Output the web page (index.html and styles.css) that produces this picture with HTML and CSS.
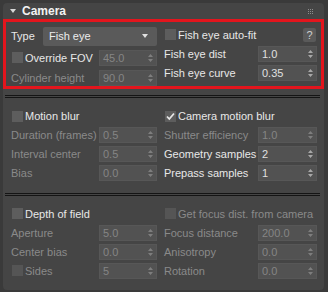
FILE: index.html
```html
<!DOCTYPE html>
<html lang="en">
<head>
    <meta charset="UTF-8">
    <link rel="stylesheet" href="styles.css">
</head>
<body>
    <div class="panel">
        <div class="head">
            <svg class="tri" width="6" height="4" viewBox="0 0 6 4"><path d="M0 0H6L3 4Z" fill="#d8d8d8"/></svg>
            <span class="title">Camera</span>
            <svg class="grip" width="5" height="5" viewBox="0 0 5 5" fill="#8c8c8c">
                <rect x="0" y="0" width="1" height="1"/><rect x="2" y="0" width="1" height="1"/><rect x="4" y="0" width="1" height="1"/>
                <rect x="0" y="2" width="1" height="1"/><rect x="2" y="2" width="1" height="1"/><rect x="4" y="2" width="1" height="1"/>
                <rect x="0" y="4" width="1" height="1"/><rect x="2" y="4" width="1" height="1"/><rect x="4" y="4" width="1" height="1"/>
            </svg>
        </div>

        <div class="sec sec-cam">
            <div class="col col-l wide-gap">
                <div class="row row-combo">
                    <span class="lbl">Type</span>
                    <div class="combo">Fish eye
                        <svg width="6" height="4" viewBox="0 0 6 4"><path d="M0 0H6L3 4Z" fill="#e0e0e0"/></svg>
                    </div>
                </div>
                <div class="row">
                    <span class="chk"><span class="box"></span>Override FOV</span>
                    <div class="spin off">45.0<svg class="arr" width="5" height="8" viewBox="0 0 5 8"><path d="M0 3L2.5 0L5 3ZM0 5H5L2.5 8Z"/></svg></div>
                </div>
                <div class="row off">
                    <span class="lbl">Cylinder height</span>
                    <div class="spin">90.0<svg class="arr" width="5" height="8" viewBox="0 0 5 8"><path d="M0 3L2.5 0L5 3ZM0 5H5L2.5 8Z"/></svg></div>
                </div>
            </div>
            <div class="col col-r">
                <div class="row">
                    <span class="chk"><span class="box"></span>Fish eye auto-fit</span>
                    <span class="help">?</span>
                </div>
                <div class="row">
                    <span class="lbl">Fish eye dist</span>
                    <div class="spin">1.0<svg class="arr" width="5" height="8" viewBox="0 0 5 8"><path d="M0 3L2.5 0L5 3ZM0 5H5L2.5 8Z"/></svg></div>
                </div>
                <div class="row">
                    <span class="lbl">Fish eye curve</span>
                    <div class="spin">0.35<svg class="arr" width="5" height="8" viewBox="0 0 5 8"><path d="M0 3L2.5 0L5 3ZM0 5H5L2.5 8Z"/></svg></div>
                </div>
            </div>
        </div>

        <div class="sep sep-first"></div>

        <div class="sec">
            <div class="col col-l">
                <div class="row">
                    <span class="chk"><span class="box"></span>Motion blur</span>
                </div>
                <div class="row off">
                    <span class="lbl">Duration (frames)</span>
                    <div class="spin">0.5<svg class="arr" width="5" height="8" viewBox="0 0 5 8"><path d="M0 3L2.5 0L5 3ZM0 5H5L2.5 8Z"/></svg></div>
                </div>
                <div class="row off">
                    <span class="lbl">Interval center</span>
                    <div class="spin">0.5<svg class="arr" width="5" height="8" viewBox="0 0 5 8"><path d="M0 3L2.5 0L5 3ZM0 5H5L2.5 8Z"/></svg></div>
                </div>
                <div class="row off">
                    <span class="lbl">Bias</span>
                    <div class="spin">0.0<svg class="arr" width="5" height="8" viewBox="0 0 5 8"><path d="M0 3L2.5 0L5 3ZM0 5H5L2.5 8Z"/></svg></div>
                </div>
            </div>
            <div class="col col-r">
                <div class="row">
                    <span class="chk"><span class="box"><svg width="11" height="11" viewBox="0 0 11 11"><path d="M2 5.5L4.3 8L9 2.5" fill="none" stroke="#e6e6e6" stroke-width="1.8"/></svg></span>Camera motion blur</span>
                </div>
                <div class="row off">
                    <span class="lbl">Shutter efficiency</span>
                    <div class="spin">1.0<svg class="arr" width="5" height="8" viewBox="0 0 5 8"><path d="M0 3L2.5 0L5 3ZM0 5H5L2.5 8Z"/></svg></div>
                </div>
                <div class="row">
                    <span class="lbl">Geometry samples</span>
                    <div class="spin">2<svg class="arr" width="5" height="8" viewBox="0 0 5 8"><path d="M0 3L2.5 0L5 3ZM0 5H5L2.5 8Z"/></svg></div>
                </div>
                <div class="row">
                    <span class="lbl">Prepass samples</span>
                    <div class="spin">1<svg class="arr" width="5" height="8" viewBox="0 0 5 8"><path d="M0 3L2.5 0L5 3ZM0 5H5L2.5 8Z"/></svg></div>
                </div>
            </div>
        </div>

        <div class="sep"></div>

        <div class="sec">
            <div class="col col-l">
                <div class="row">
                    <span class="chk"><span class="box"></span>Depth of field</span>
                </div>
                <div class="row off">
                    <span class="lbl">Aperture</span>
                    <div class="spin">5.0<svg class="arr" width="5" height="8" viewBox="0 0 5 8"><path d="M0 3L2.5 0L5 3ZM0 5H5L2.5 8Z"/></svg></div>
                </div>
                <div class="row off">
                    <span class="lbl">Center bias</span>
                    <div class="spin">0.0<svg class="arr" width="5" height="8" viewBox="0 0 5 8"><path d="M0 3L2.5 0L5 3ZM0 5H5L2.5 8Z"/></svg></div>
                </div>
                <div class="row off">
                    <span class="chk"><span class="box"></span>Sides</span>
                    <div class="spin">5<svg class="arr" width="5" height="8" viewBox="0 0 5 8"><path d="M0 3L2.5 0L5 3ZM0 5H5L2.5 8Z"/></svg></div>
                </div>
            </div>
            <div class="col col-r">
                <div class="row off">
                    <span class="chk"><span class="box"></span>Get focus dist. from camera</span>
                </div>
                <div class="row off">
                    <span class="lbl">Focus distance</span>
                    <div class="spin">200.0<svg class="arr" width="5" height="8" viewBox="0 0 5 8"><path d="M0 3L2.5 0L5 3ZM0 5H5L2.5 8Z"/></svg></div>
                </div>
                <div class="row off">
                    <span class="lbl">Anisotropy</span>
                    <div class="spin">0.0<svg class="arr" width="5" height="8" viewBox="0 0 5 8"><path d="M0 3L2.5 0L5 3ZM0 5H5L2.5 8Z"/></svg></div>
                </div>
                <div class="row off">
                    <span class="lbl">Rotation</span>
                    <div class="spin">0.0<svg class="arr" width="5" height="8" viewBox="0 0 5 8"><path d="M0 3L2.5 0L5 3ZM0 5H5L2.5 8Z"/></svg></div>
                </div>
            </div>
        </div>
    </div>
</body>
</html>
```

FILE: styles.css
```css
body {
    margin: 0;
    background: #3a3a3a;
    font-family: "Liberation Sans", Arial, sans-serif;
    font-size: 11px;
    color: #e8e8e8;
}

.panel {
    margin: 3px 0 0 3px;
    width: 321px;
    height: 287px;
    background: #454545;
    border-radius: 4px;
    overflow: hidden;
    display: flex;
    flex-direction: column;
}

.head {
    height: 16px;
    display: flex;
    align-items: center;
    padding: 1px 7px 0 7px;
    box-sizing: border-box;
}
.head .tri {
    margin-right: 6px;
}
.head .title {
    font-size: 12px;
    font-weight: 700;
    color: #f2f2f2;
}
.head .grip {
    margin-left: auto;
    margin-right: 4px;
}

/* sections */
.sec {
    display: flex;
    gap: 7px;
    height: 95px;
    padding: 10px 7px 0 8px;
    box-sizing: border-box;
}
.sec-cam {
    height: 71px;
    border: 3px solid #e3151d; /* highlight box */
    padding: 5px 4px 0 5px;
}

.col {
    display: flex;
    flex-direction: column;
    gap: 3px;
}
.col-l { width: 146px; }
.col-r { width: 153px; }
.wide-gap { gap: 4px; }

.row {
    height: 16px;
    display: flex;
    align-items: center;
    justify-content: space-between;
    white-space: nowrap;
}
.row-combo { height: 19px; }

.off { color: #8a8a8a; }

.sep {
    height: 1px;
    border-top: 1px solid #151515;
    border-bottom: 1px solid #151515;
    margin: 0 4px 0 2px;
    flex-shrink: 0;
}
.sep-first { margin-top: 6px; }

/* controls */
.chk {
    display: flex;
    align-items: center;
}
.box {
    width: 11px;
    height: 11px;
    background: #5d5d5d;
    margin: 0 2px 0 1px;
    display: flex;
}
.off .box { background: #555555; }

.combo {
    width: 114px;
    height: 19px;
    box-sizing: border-box;
    background: #5a5a5a;
    border-radius: 2px;
    padding: 0 9px 0 6px;
    display: flex;
    align-items: center;
    justify-content: space-between;
    color: #ececec;
}

.spin {
    width: 58px;
    height: 16px;
    box-sizing: border-box;
    background: #525252;
    border: 1px solid #575757;
    padding: 0 3px 0 3px;
    display: flex;
    align-items: center;
    justify-content: space-between;
    color: #e0e0e0;
}
.spin .arr { fill: #a8a8a8; }
.off .spin, .spin.off { color: #858585; }
.off .spin .arr, .spin.off .arr { fill: #7e7e7e; }

.col-r .spin { width: 59px; }

.help {
    width: 13px;
    height: 14px;
    background: #5a5a5a;
    border-radius: 2px;
    margin-right: 1px;
    display: flex;
    align-items: center;
    justify-content: center;
    color: #cfcfcf;
    font-size: 11px;
}
```
